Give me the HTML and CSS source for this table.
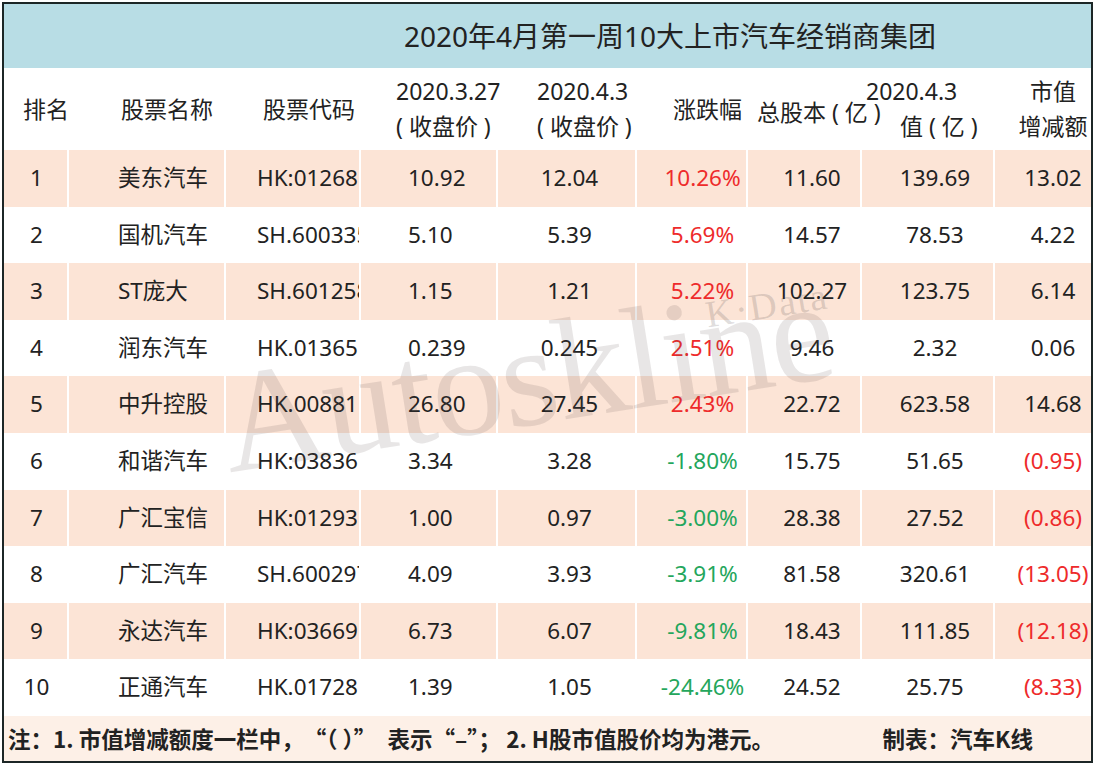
FILE: index.html
```html
<!DOCTYPE html>
<html lang="zh-CN">
<head>
<meta charset="utf-8">
<title>2020年4月第一周10大上市汽车经销商集团</title>
<link rel="stylesheet" href="styles.css">
</head>
<body>
<div class="sheet">
  <div class="title">2020年4月第一周10大上市汽车经销商集团</div>
  <div class="row head">
    <div class="c hc1">排名</div>
    <div class="c hc2">股票名称</div>
    <div class="c hc3">股票代码</div>
    <div class="c hc4"><span>2020.3.27</span><span>( 收盘价 )</span></div>
    <div class="c hc5"><span>2020.4.3</span><span>( 收盘价 )</span></div>
    <div class="c hc6">涨跌幅</div>
    <div class="c hc7">总股本 ( 亿 )</div>
    <div class="c hc8"><span>2020.4.3</span><span class="l2">值 ( 亿 )</span></div>
    <div class="c hc9"><span>市值</span><span>增减额</span></div>
  </div>
  <div class="row alt"><div class="c c1">1</div><div class="c c2">美东汽车</div><div class="c c3">HK:01268</div><div class="c c4">10.92</div><div class="c c5">12.04</div><div class="c c6 up">10.26%</div><div class="c c7">11.60</div><div class="c c8">139.69</div><div class="c c9">13.02</div></div>
  <div class="row"><div class="c c1">2</div><div class="c c2">国机汽车</div><div class="c c3">SH.600335</div><div class="c c4">5.10</div><div class="c c5">5.39</div><div class="c c6 up">5.69%</div><div class="c c7">14.57</div><div class="c c8">78.53</div><div class="c c9">4.22</div></div>
  <div class="row alt"><div class="c c1">3</div><div class="c c2">ST庞大</div><div class="c c3">SH.601258</div><div class="c c4">1.15</div><div class="c c5">1.21</div><div class="c c6 up">5.22%</div><div class="c c7">102.27</div><div class="c c8">123.75</div><div class="c c9">6.14</div></div>
  <div class="row"><div class="c c1">4</div><div class="c c2">润东汽车</div><div class="c c3">HK.01365</div><div class="c c4">0.239</div><div class="c c5">0.245</div><div class="c c6 up">2.51%</div><div class="c c7">9.46</div><div class="c c8">2.32</div><div class="c c9">0.06</div></div>
  <div class="row alt"><div class="c c1">5</div><div class="c c2">中升控股</div><div class="c c3">HK.00881</div><div class="c c4">26.80</div><div class="c c5">27.45</div><div class="c c6 up">2.43%</div><div class="c c7">22.72</div><div class="c c8">623.58</div><div class="c c9">14.68</div></div>
  <div class="row"><div class="c c1">6</div><div class="c c2">和谐汽车</div><div class="c c3">HK:03836</div><div class="c c4">3.34</div><div class="c c5">3.28</div><div class="c c6 down">-1.80%</div><div class="c c7">15.75</div><div class="c c8">51.65</div><div class="c c9 neg">(0.95)</div></div>
  <div class="row alt"><div class="c c1">7</div><div class="c c2">广汇宝信</div><div class="c c3">HK:01293</div><div class="c c4">1.00</div><div class="c c5">0.97</div><div class="c c6 down">-3.00%</div><div class="c c7">28.38</div><div class="c c8">27.52</div><div class="c c9 neg">(0.86)</div></div>
  <div class="row"><div class="c c1">8</div><div class="c c2">广汇汽车</div><div class="c c3">SH.600297</div><div class="c c4">4.09</div><div class="c c5">3.93</div><div class="c c6 down">-3.91%</div><div class="c c7">81.58</div><div class="c c8">320.61</div><div class="c c9 neg">(13.05)</div></div>
  <div class="row alt"><div class="c c1">9</div><div class="c c2">永达汽车</div><div class="c c3">HK:03669</div><div class="c c4">6.73</div><div class="c c5">6.07</div><div class="c c6 down">-9.81%</div><div class="c c7">18.43</div><div class="c c8">111.85</div><div class="c c9 neg">(12.18)</div></div>
  <div class="row"><div class="c c1">10</div><div class="c c2">正通汽车</div><div class="c c3">HK.01728</div><div class="c c4">1.39</div><div class="c c5">1.05</div><div class="c c6 down">-24.46%</div><div class="c c7">24.52</div><div class="c c8">25.75</div><div class="c c9 neg">(8.33)</div></div>
  <div class="foot"><span>注：1. 市值增减额度一栏中，　“（ ）”　表示“–”； 2. H股市值股价均为港元。</span><span>制表：汽车K线</span></div>
  <div class="wm">Autoskline</div>
  <div class="wm2">K·Data</div>
</div>
</body>
</html>
```

FILE: styles.css
```css
* { box-sizing: border-box; }
html, body { margin: 0; padding: 0; background: #fff; }
body {
  font-family: "Noto Sans", "Noto Sans CJK SC", sans-serif;
  color: #222;
}
.sheet {
  position: relative;
  margin: 2px 0 0 2px;
  width: 1091px;
  border: 2px solid #1c2626;
  overflow: hidden;
}
.title {
  height: 64px;
  background: #b8dde5;
  font-size: 28px;
  display: flex;
  align-items: center;
  justify-content: center;
  padding-left: 245px;
  padding-bottom: 3px;
}
.row {
  display: grid;
  grid-template-columns: 65px 157px 135px 137px 139px 111px 114px 133px 96px;
  height: 56.6px;
  font-size: 22.5px;
  line-height: 1;
}
.row.alt { background: #fce4d6; }
.c {
  border-right: 2px solid #fff;
  display: flex;
  align-items: center;
  white-space: nowrap;
}
.c:last-child { border-right: 0; }
.c1 { justify-content: center; padding-left: 2px; }
.c2 { padding-left: 49px; }
.c3 { padding-left: 31px; overflow: hidden; }
.c4 { padding-left: 47px; }
.c5 { justify-content: center; padding-left: 6px; }
.c6 { justify-content: center; padding-left: 22px; }
.c7 { justify-content: center; padding-left: 16px; }
.c8 { justify-content: center; padding-left: 15px; }
.c9 { justify-content: center; padding-left: 20px; }
.up, .neg { color: #ee2b2b; }
.down { color: #24a65c; }

.head { height: 82px; font-size: 23px; }
.head .c {
  flex-direction: column;
  justify-content: center;
  align-items: flex-start;
  line-height: 35px;
}
.hc1 { padding-left: 19px; }
.hc2 { padding-left: 52px; }
.hc3 { padding-left: 37px; }
.hc4 { padding-left: 35px; }
.hc5 { padding-left: 39px; }
.hc6 { padding-left: 36px; }
.hc7 { padding-left: 9px; padding-top: 6px; }
.hc8 { padding-left: 4px; }
.hc8 .l2 { padding-left: 34px; }
.head .hc9 { align-items: center; padding-left: 20px; }

.foot {
  height: 45px;
  background: #fdf0e7;
  font-family: "Noto Sans CJK SC", sans-serif;
  font-weight: 700;
  font-size: 22.5px;
  display: flex;
  align-items: center;
  justify-content: space-between;
  padding: 0 58px 0 4px;
  white-space: nowrap;
}

.wm {
  position: absolute;
  left: 214px;
  top: 300px;
  font-family: "Liberation Serif", serif;
  font-size: 145px;
  letter-spacing: -2px;
  line-height: 1;
  color: rgba(90, 80, 80, 0.14);
  transform: rotate(-9deg);
  pointer-events: none;
  white-space: nowrap;
}
.wm2 {
  position: absolute;
  left: 701px;
  top: 282px;
  font-family: "Liberation Serif", serif;
  font-size: 38px;
  letter-spacing: 2px;
  line-height: 1;
  color: rgba(90, 80, 80, 0.2);
  transform: rotate(-9deg);
  pointer-events: none;
  white-space: nowrap;
}
```
